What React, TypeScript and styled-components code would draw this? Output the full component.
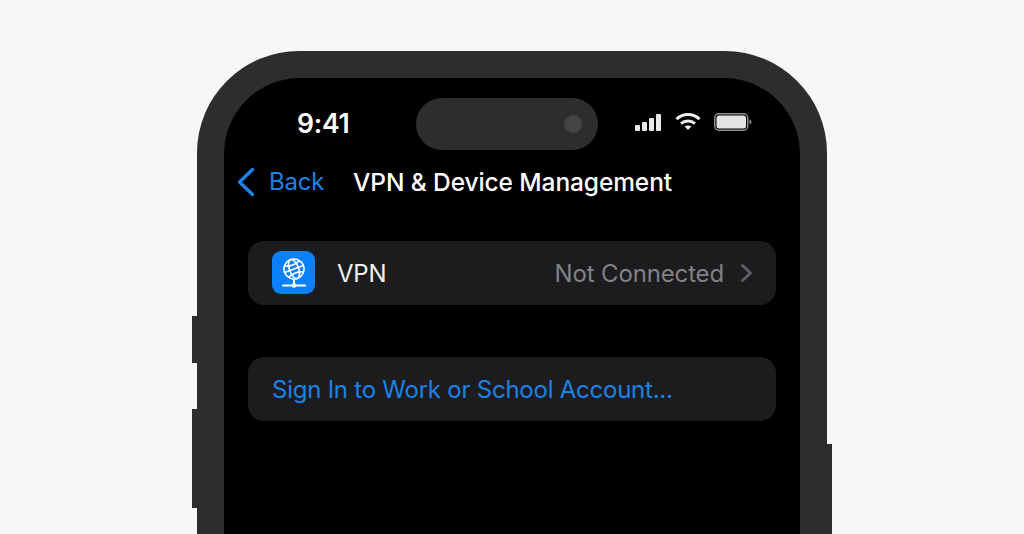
import React from 'react';
import styled, { createGlobalStyle } from 'styled-components';

const GlobalStyle = createGlobalStyle`
  html, body {
    margin: 0;
    padding: 0;
    height: 534px;
    overflow: hidden;
    background: #f6f6f6;
    font-family: Inter, "Liberation Sans", sans-serif;
  }
`;

const Page = styled.div`
  width: 1024px;
  height: 534px;
  padding-top: 51px;
  box-sizing: border-box;
  overflow: hidden;
  display: flex;
  justify-content: center;
  background: #f6f6f6;
`;

const Phone = styled.div`
  position: relative;
  flex: none;
  width: 630px;
  height: 540px;
  box-sizing: border-box;
  padding: 27px 27px 0;
  background: #2d2d2d;
  border-radius: 102px 102px 0 0;
`;

const SideButton = styled.div<{ $side: 'left' | 'right'; $top: number; $height: number }>`
  position: absolute;
  width: 5px;
  top: ${(p) => p.$top}px;
  height: ${(p) => p.$height}px;
  ${(p) => p.$side}: -5px;
  background: #2d2d2d;
`;

const Screen = styled.div`
  height: 100%;
  background: #000;
  border-radius: 76px 76px 0 0;
  display: flex;
  flex-direction: column;
`;

const StatusBar = styled.div`
  display: flex;
  align-items: center;
  height: 52px;
  margin-top: 20px;
  padding-left: 73px;
`;

const Time = styled.span`
  width: 119px;
  padding-bottom: 2px;
  color: #fff;
  font-size: 26.5px;
  font-weight: 600;
  letter-spacing: -0.2px;
  line-height: 50px;
`;

const Island = styled.div`
  flex: none;
  width: 182px;
  height: 52px;
  box-sizing: border-box;
  padding-right: 16px;
  border-radius: 26px;
  background: #2d2d2d;
  display: flex;
  align-items: center;
  justify-content: flex-end;
`;

const Camera = styled.div`
  width: 18px;
  height: 18px;
  border-radius: 50%;
  background: #444446;
`;

const StatusIcons = styled.div`
  display: flex;
  align-items: center;
  margin-left: 37px;
  margin-top: -4px;
`;

const WifiSlot = styled.span`
  display: flex;
  margin: 0 13px;
`;

const NavBar = styled.div`
  display: flex;
  align-items: center;
  height: 64px;
  padding-left: 13px;
  margin-bottom: 27px;
`;

const BackLabel = styled.span`
  margin-left: 14px;
  width: 84px;
  color: #1c82e6;
  font-size: 24px;
  letter-spacing: -0.2px;
  line-height: 32px;
`;

const Title = styled.span`
  color: #fff;
  font-size: 24.5px;
  font-weight: 500;
  letter-spacing: -0.1px;
  line-height: 32px;
  white-space: nowrap;
`;

const Rows = styled.div`
  display: flex;
  flex-direction: column;
  gap: 52px;
  padding: 0 24px;
`;

const Row = styled.div`
  height: 64px;
  box-sizing: border-box;
  padding: 0 24px;
  display: flex;
  align-items: center;
  background: #1c1c1e;
  border-radius: 16px;
  font-size: 24px;
  letter-spacing: -0.24px;
  line-height: 32px;
`;

const AppIcon = styled.div`
  flex: none;
  width: 43px;
  height: 43px;
  margin-top: -1px;
  border-radius: 9px;
  background: #0a80fa;
  display: flex;
  align-items: center;
  justify-content: center;
`;

const RowLabel = styled.span`
  margin-left: 22px;
  padding-top: 2px;
  color: #f2f2f2;
`;

const RowValue = styled.span`
  margin-left: auto;
  margin-right: 17px;
  padding-top: 2px;
  color: #818186;
  letter-spacing: -0.15px;
`;

const LinkLabel = styled.span`
  padding-top: 2px;
  color: #1c82e6;
`;

const SignalIcon = () => (
  <svg width="27" height="17" viewBox="0 0 27 17" fill="#e8e8e8">
    <rect x="0" y="11" width="5" height="6" rx="1" />
    <rect x="7" y="8" width="5" height="9" rx="1" />
    <rect x="14" y="4" width="5" height="13" rx="1" />
    <rect x="21" y="0" width="5" height="17" rx="1" />
  </svg>
);

const WifiIcon = () => (
  <svg width="26" height="18" viewBox="0 0 26 18" fill="none" stroke="#eeeeee" strokeWidth="3">
    <path d="M1.5 6.2C8 0 18 0 24.5 6.2" />
    <path d="M6 10.6c4-3.6 10-3.6 14 0" />
    <path d="M9.6 13.6 13 17l3.4-3.4c-2-1.6-4.8-1.6-6.8 0Z" fill="#eeeeee" stroke="none" />
  </svg>
);

const BatteryIcon = () => (
  <svg width="38" height="18" viewBox="0 0 38 18">
    <rect x="0.75" y="0.75" width="33" height="16.5" rx="4" fill="none" stroke="#8c8c8c" strokeWidth="1.5" />
    <rect x="2.5" y="2.5" width="29.5" height="13" rx="2.5" fill="#e4e4e4" />
    <path d="M35.5 6.5c1.3.4 2 1.3 2 2.5s-.7 2.1-2 2.5Z" fill="#8c8c8c" />
  </svg>
);

const BackChevron = () => (
  <svg width="18" height="30" viewBox="0 0 18 30" fill="none" stroke="#1c82e6" strokeWidth="3.4" strokeLinecap="round" strokeLinejoin="round">
    <path d="M15.5 2.5 2.5 15l13 12.5" />
  </svg>
);

const RowChevron = () => (
  <svg width="11" height="18" viewBox="0 0 11 18" fill="none" stroke="#5f5f63" strokeWidth="2.8" strokeLinecap="round" strokeLinejoin="round">
    <path d="M1.5 1.5 9.5 9l-8 7.5" />
  </svg>
);

// globe on a stand, white on the blue tile
const GlobeIcon = () => (
  <svg width="24" height="30" viewBox="0 0 24 30" fill="none" stroke="#fff" strokeWidth="1.6">
    <g transform="rotate(-20 12 11)">
      <circle cx="12" cy="11" r="10" />
      <path d="M2 11h20" />
      <path d="M4 5c4.8 2.2 11.2 2.2 16 0" />
      <path d="M4 17c4.8-2.2 11.2-2.2 16 0" />
      <ellipse cx="12" cy="11" rx="4.6" ry="10" />
    </g>
    <path d="M12 21v6" strokeWidth="2" />
    <path d="M1 27.5h22" strokeWidth="2" strokeLinecap="round" />
    <circle cx="12" cy="27.5" r="2.3" fill="#fff" stroke="none" />
  </svg>
);

export default function App() {
  return (
    <Page>
      <GlobalStyle />
      <Phone>
        <SideButton $side="left" $top={265} $height={47} />
        <SideButton $side="left" $top={358} $height={99} />
        <SideButton $side="right" $top={393} $height={147} />
        <Screen>
          <StatusBar>
            <Time>9:41</Time>
            <Island>
              <Camera />
            </Island>
            <StatusIcons>
              <SignalIcon />
              <WifiSlot>
                <WifiIcon />
              </WifiSlot>
              <BatteryIcon />
            </StatusIcons>
          </StatusBar>
          <NavBar>
            <BackChevron />
            <BackLabel>Back</BackLabel>
            <Title>VPN &amp; Device Management</Title>
          </NavBar>
          <Rows>
            <Row>
              <AppIcon>
                <GlobeIcon />
              </AppIcon>
              <RowLabel>VPN</RowLabel>
              <RowValue>Not Connected</RowValue>
              <RowChevron />
            </Row>
            <Row>
              <LinkLabel>Sign In to Work or School Account...</LinkLabel>
            </Row>
          </Rows>
        </Screen>
      </Phone>
    </Page>
  );
}
